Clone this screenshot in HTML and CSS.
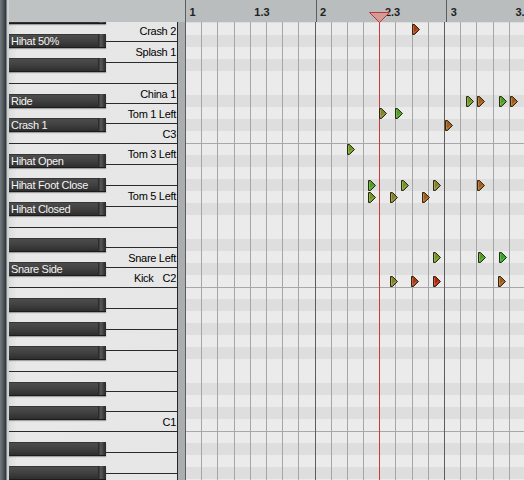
FILE: index.html
```html
<!DOCTYPE html>
<html>
<head>
  <title>Drum Editor</title>
  <link rel="stylesheet" href="styles.css">
</head>
<body>
  <svg width="0" height="0" class="defs">
    <symbol id="note" viewBox="0 0 8 11">
      <polygon points="0.5,0.5 2.5,0.5 7.5,5.5 2.5,10.5 0.5,10.5" fill="currentColor" stroke="#2a2a12" stroke-width="1"/>
      <polyline points="1.5,2 1.5,9 5.5,5.5" fill="none" stroke="rgba(255,255,255,0.25)" stroke-width="1"/>
    </symbol>
  </svg>
  <div class="editor">
    <div class="edge"></div>
    <div class="left-pane">
      <div class="corner"></div>
      <div class="keys-area">
        <div class="keyboard">
          <div class="white-key first"><span>Crash 2</span></div>
          <div class="white-key"><span>Splash 1</span></div>
          <div class="white-key"></div>
          <div class="white-key narrow"><span>China 1</span></div>
          <div class="white-key narrow"><span>Tom 1 Left</span></div>
          <div class="white-key narrow"><span>C3</span></div>
          <div class="white-key"><span>Tom 3 Left</span></div>
          <div class="white-key"></div>
          <div class="white-key"><span>Tom 5 Left</span></div>
          <div class="white-key"></div>
          <div class="white-key narrow"></div>
          <div class="white-key narrow"><span>Snare Left</span></div>
          <div class="white-key narrow"><span>Kick</span><span>C2</span></div>
          <div class="white-key"></div>
          <div class="white-key"></div>
          <div class="white-key"></div>
          <div class="white-key"></div>
          <div class="white-key narrow"></div>
          <div class="white-key narrow"></div>
          <div class="white-key narrow"><span>C1</span></div>
          <div class="white-key"></div>
          <div class="white-key"></div>
          <div class="white-key"></div>

          <div class="black-key" style="top:-12px"></div>
          <div class="black-key" style="top:12px">Hihat 50%</div>
          <div class="black-key" style="top:36px"></div>
          <div class="black-key" style="top:72px">Ride</div>
          <div class="black-key" style="top:96px">Crash 1</div>
          <div class="black-key" style="top:132px">Hihat Open</div>
          <div class="black-key" style="top:156px">Hihat Foot Close</div>
          <div class="black-key" style="top:180px">Hihat Closed</div>
          <div class="black-key" style="top:216px"></div>
          <div class="black-key" style="top:240px">Snare Side</div>
          <div class="black-key" style="top:276px"></div>
          <div class="black-key" style="top:300px"></div>
          <div class="black-key" style="top:324px"></div>
          <div class="black-key" style="top:360px"></div>
          <div class="black-key" style="top:384px"></div>
          <div class="black-key" style="top:420px"></div>
          <div class="black-key" style="top:444px"></div>
        </div>
        <div class="gutter"></div>
      </div>
    </div>
    <div class="main-pane">
      <div class="ruler">
        <div class="bar"><span class="beat">1</span><span class="beat">1.3</span></div>
        <div class="bar"><span class="beat">2</span><span class="beat">2.3</span></div>
        <div class="bar"><span class="beat">3</span><span class="beat">3.3</span></div>
      </div>
      <div class="grid">
        <div class="columns">
          <div></div><div></div><div></div><div></div><div></div><div></div><div></div><div></div>
          <div></div><div></div><div></div><div></div><div></div><div></div><div></div><div></div>
          <div></div><div></div><div></div><div></div><div></div><div></div>
        </div>
        <div class="playhead"></div>

        <svg class="note red-brown" style="left:227px;top:2px"><use href="#note"/></svg>

        <svg class="note olive-green" style="left:281px;top:74px"><use href="#note"/></svg>
        <svg class="note brown" style="left:292px;top:74px"><use href="#note"/></svg>
        <svg class="note green" style="left:314px;top:74px"><use href="#note"/></svg>
        <svg class="note brown" style="left:325px;top:74px"><use href="#note"/></svg>

        <svg class="note olive" style="left:194px;top:86px"><use href="#note"/></svg>
        <svg class="note green" style="left:210px;top:86px"><use href="#note"/></svg>

        <svg class="note brown" style="left:260px;top:98px"><use href="#note"/></svg>

        <svg class="note olive-green" style="left:162px;top:122px"><use href="#note"/></svg>

        <svg class="note green" style="left:183px;top:158px"><use href="#note"/></svg>
        <svg class="note olive-green" style="left:216px;top:158px"><use href="#note"/></svg>
        <svg class="note olive" style="left:248px;top:158px"><use href="#note"/></svg>
        <svg class="note brown" style="left:292px;top:158px"><use href="#note"/></svg>

        <svg class="note olive-green" style="left:183px;top:170px"><use href="#note"/></svg>
        <svg class="note olive" style="left:205px;top:170px"><use href="#note"/></svg>
        <svg class="note brown" style="left:237px;top:170px"><use href="#note"/></svg>

        <svg class="note olive-green" style="left:248px;top:230px"><use href="#note"/></svg>
        <svg class="note green" style="left:293px;top:230px"><use href="#note"/></svg>
        <svg class="note bright-green" style="left:314px;top:230px"><use href="#note"/></svg>

        <svg class="note olive" style="left:205px;top:254px"><use href="#note"/></svg>
        <svg class="note red-brown" style="left:226px;top:254px"><use href="#note"/></svg>
        <svg class="note red" style="left:248px;top:254px"><use href="#note"/></svg>
        <svg class="note brown" style="left:313px;top:254px"><use href="#note"/></svg>
      </div>
      <svg class="locator" width="21" height="11" viewBox="0 0 21 11">
        <polygon points="0.5,0.5 20.5,0.5 10.5,10.5" fill="#d49a98" stroke="#b83a3a" stroke-width="1"/>
      </svg>
    </div>
  </div>
</body>
</html>
```

FILE: styles.css
```css
body {
  margin: 0;
  width: 524px;
  height: 480px;
  overflow: hidden;
  font-family: "Liberation Sans", Arial, sans-serif;
  font-size: 11px;
  background: #e6e6e6;
}
.defs {
  position: absolute;
}
.editor {
  display: flex;
  height: 480px;
}
.edge {
  width: 9px;
  flex: none;
  background: linear-gradient(to right, #737b80 0, #545c61 3px, #30363a 6px, #c6caca 7px, #d2d6d6 9px);
}
.left-pane {
  width: 176px;
  flex: none;
  display: flex;
  flex-direction: column;
}
.corner {
  height: 22px;
  flex: none;
  background: #bec2c2;
}
.keys-area {
  flex: 1;
  display: flex;
  min-height: 0;
}
.keyboard {
  width: 168px;
  border-right: 1px solid #262626;
  position: relative;
  overflow: hidden;
  background: #e6e6e6;
}
.gutter {
  width: 7px;
  background: #aaaeae;
}
.white-key {
  height: 21px;
  box-sizing: border-box;
  border-bottom: 1px solid #2a2a2a;
  background: linear-gradient(to right, #dcdcdc, #e8e8e8 8px, #e6e6e6);
  display: flex;
  justify-content: flex-end;
  align-items: center;
  gap: 9px;
  padding-right: 1px;
  color: #000;
  letter-spacing: -0.3px;
  white-space: nowrap;
}
.white-key.first {
  margin-top: -1px;
}
.white-key.narrow {
  height: 20px;
}
.black-key {
  position: absolute;
  left: 0;
  width: 97px;
  height: 13px;
  box-sizing: border-box;
  padding-left: 2px;
  background: linear-gradient(#222 0, #4c4c4c 1px, #434343 45%, #2e2e2e 100%);
  box-shadow: 0 1px 0 #1c1c1c, 0 2px 1px rgba(0, 0, 0, 0.3);
  color: #f4f4f4;
  line-height: 14px;
  letter-spacing: -0.3px;
  white-space: nowrap;
}
.black-key::after {
  content: "";
  position: absolute;
  right: 0;
  top: 0;
  width: 8px;
  height: 100%;
  background: linear-gradient(to right, #222, #5a5a5a 35%, #3c3c3c 70%, #2a2a2a);
}
.main-pane {
  flex: 1;
  min-width: 0;
  display: flex;
  flex-direction: column;
  position: relative;
}
.ruler {
  height: 22px;
  flex: none;
  display: flex;
  background: #b9bdbd;
  overflow: hidden;
}
.bar {
  flex: 0 0 129.6px;
  box-sizing: border-box;
  border-left: 1px solid #5a5e5e;
  display: flex;
}
.beat {
  flex: 0 0 64.8px;
  box-sizing: border-box;
  padding: 6px 0 0 3.5px;
  font-weight: bold;
  color: #1e2222;
}
.grid {
  flex: 1;
  position: relative;
  overflow: hidden;
  background: linear-gradient(to bottom,
    #a8a8a8 0, #a8a8a8 1px,
    #ebebeb 1px, #ebebeb 12px,
    #dedede 12px, #dedede 24px,
    #ebebeb 24px, #ebebeb 36px,
    #dedede 36px, #dedede 48px,
    #ebebeb 48px, #ebebeb 60px,
    #dedede 60px, #dedede 72px,
    #ebebeb 72px, #ebebeb 96px,
    #dedede 96px, #dedede 108px,
    #ebebeb 108px, #ebebeb 120px,
    #dedede 120px, #dedede 132px,
    #ebebeb 132px, #ebebeb 144px);
  background-size: 100% 144px;
  background-position: 0 121px;
}
.columns {
  position: absolute;
  inset: 0;
  display: flex;
}
.columns div {
  flex: 0 0 16.2px;
  box-sizing: border-box;
  border-left: 1px solid #a6a6a6;
}
.columns div:nth-child(8n+1) {
  border-left-color: #5c5c5c;
}
.playhead {
  position: absolute;
  left: 194px;
  top: 0;
  bottom: 0;
  width: 1px;
  background: #c83a3a;
}
.note {
  position: absolute;
  width: 8px;
  height: 11px;
}
.locator {
  position: absolute;
  left: 184px;
  top: 12px;
}
.red-brown { color: #a83a12; }
.red { color: #b4220e; }
.brown { color: #a45a18; }
.olive { color: #85802a; }
.olive-green { color: #6e9426; }
.green { color: #4e9c24; }
.bright-green { color: #2ea624; }
```
